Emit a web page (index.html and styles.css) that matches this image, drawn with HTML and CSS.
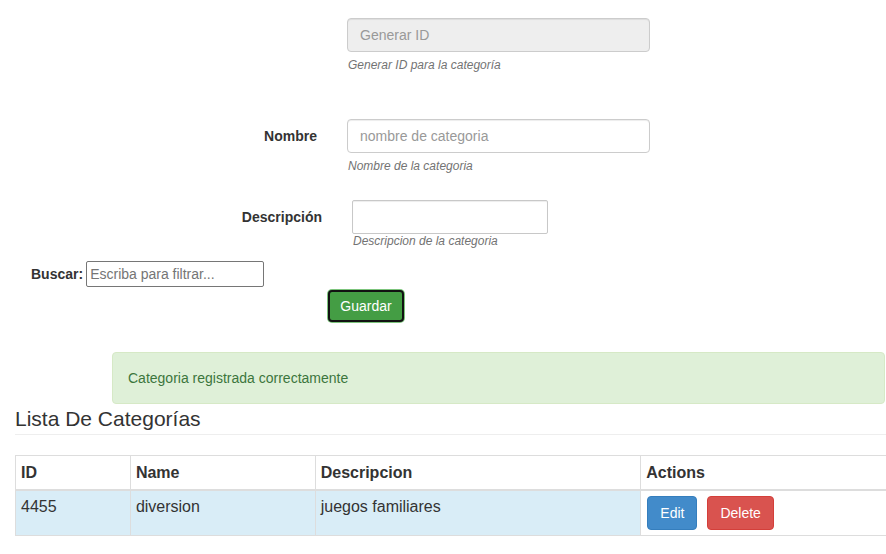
FILE: index.html
```html
<!DOCTYPE html>
<html lang="es">
<head>
<meta charset="utf-8">
<title>Categorías</title>
<link rel="stylesheet" href="styles.css">
</head>
<body>
<div class="page">
  <form class="form">
    <div class="group group-id">
      <div class="label-col"></div>
      <div class="field">
        <input class="control control-wide" type="text" placeholder="Generar ID" disabled>
        <span class="help">Generar ID para la categoría</span>
      </div>
    </div>
    <div class="group group-name">
      <label class="label-col">Nombre</label>
      <div class="field">
        <input class="control control-wide" type="text" placeholder="nombre de categoria">
        <span class="help">Nombre de la categoria</span>
      </div>
    </div>
    <div class="group group-desc">
      <label class="label-col label-desc">Descripción</label>
      <div class="field">
        <input class="control control-desc" type="text">
        <span class="help help-tight">Descripcion de la categoria</span>
      </div>
    </div>
    <div class="search">
      <label class="search-label">Buscar:</label>
      <input class="search-input" type="text" placeholder="Escriba para filtrar...">
    </div>
    <div class="actions">
      <button type="button" class="btn-save">Guardar</button>
    </div>
  </form>

  <div class="alert">Categoria registrada correctamente</div>

  <h3 class="list-title">Lista De Categorías</h3>

  <div class="table-wrap">
    <table class="table">
      <colgroup>
        <col class="c-id"><col class="c-name"><col class="c-desc"><col class="c-act">
      </colgroup>
      <thead>
        <tr><th>ID</th><th>Name</th><th>Descripcion</th><th>Actions</th></tr>
      </thead>
      <tbody>
        <tr class="info">
          <td>4455</td><td>diversion</td><td>juegos familiares</td>
          <td class="act-cell"><button type="button" class="btn btn-edit">Edit</button><button type="button" class="btn btn-delete">Delete</button></td>
        </tr>
      </tbody>
    </table>
  </div>
</div>
</body>
</html>
```

FILE: styles.css
```css
html, body {
  margin: 0;
  padding: 0;
  overflow: hidden;
  background: #fff;
}
body {
  font-family: "Liberation Sans", Arial, sans-serif;
  font-size: 14px;
  line-height: 20px;
  color: #333;
}
.page {
  width: 886px;
  overflow: hidden;
}
.form {
  padding-top: 18px;
}
.group {
  display: flex;
  align-items: flex-start;
}
.group-name { margin-top: 45px; }
.group-desc { margin-top: 25px; }
.label-col {
  width: 317px;
  padding-right: 30px;
  text-align: right;
  font-weight: bold;
  line-height: 34px;
  box-sizing: content-box;
}
.label-desc { width: 322px; }
.field {
  display: flex;
  flex-direction: column;
}
.control {
  box-sizing: border-box;
  height: 34px;
  padding: 6px 12px;
  font-family: "Liberation Sans", Arial, sans-serif;
  font-size: 14px;
  color: #555;
  background: #fff;
  border: 1px solid #ccc;
  border-radius: 4px;
  box-shadow: inset 0 1px 1px rgba(0,0,0,.075);
  outline: none;
}
.control::placeholder { color: #999; }
.control:disabled { background: #eee; }
.control-wide { width: 303px; }
.control-desc { width: 196px; border-radius: 2px; border-color: #c8c8c8; }
.help {
  display: block;
  margin-top: 5px;
  font-size: 12px;
  line-height: 17px;
  font-style: italic;
  color: #737373;
  padding-left: 1px;
}
.help-tight {
  margin-top: 0;
  line-height: 15px;
}
.search {
  display: flex;
  align-items: center;
  margin-top: 12px;
  padding-left: 31px;
}
.search-label {
  font-weight: bold;
  margin-right: 3px;
  line-height: 26px;
}
.search-input {
  box-sizing: border-box;
  width: 178px;
  height: 26px;
  padding: 1px 3px;
  font-family: "Liberation Sans", Arial, sans-serif;
  font-size: 14px;
  border: 1px solid #767676;
  border-radius: 2px;
  outline: none;
}
.search-input::placeholder { color: #757575; }
.actions {
  margin-top: 3px;
  padding-left: 328px;
}
.btn-save {
  box-sizing: border-box;
  width: 76px;
  height: 32px;
  padding: 0;
  font-family: "Liberation Sans", Arial, sans-serif;
  font-size: 14px;
  color: #fff;
  background: #449d44;
  border: 2px solid #121212;
  border-radius: 4px;
  box-shadow: 0 0 0 1px #7cc47c;
  cursor: pointer;
}
.alert {
  margin: 30px 0 0 112px;
  width: 773px;
  box-sizing: border-box;
  padding: 15px;
  color: #3c763d;
  background: #dff0d8;
  border: 1px solid #d6e9c6;
  border-radius: 4px;
}
.list-title {
  margin: 4px 0 0 15px;
  padding-bottom: 4px;
  font-size: 21px;
  line-height: 22px;
  font-weight: normal;
  color: #333;
  border-bottom: 1px solid #eee;
}
.table-wrap {
  margin: 20px 0 0 15px;
  width: 871px;
  overflow: hidden;
}
.table {
  width: 900px;
  border-collapse: collapse;
  font-size: 16px;
  line-height: 22px;
}
.c-id { width: 115px; }
.c-name { width: 185px; }
.c-desc { width: 326px; }
.c-act { width: 274px; }
.table th, .table td {
  border: 1px solid #ddd;
  padding: 5px 5px;
  text-align: left;
  vertical-align: top;
}
.table th {
  font-weight: bold;
  line-height: 23px;
  border-bottom: 2px solid #ddd;
}
.table tr.info td { background: #d9edf7; }
.table tr.info td.act-cell { background: #fff; }
.btn {
  box-sizing: border-box;
  height: 34px;
  padding: 6px 12px;
  font-family: "Liberation Sans", Arial, sans-serif;
  font-size: 14px;
  line-height: 20px;
  color: #fff;
  border: 1px solid transparent;
  border-radius: 4px;
  vertical-align: top;
  cursor: pointer;
}
.btn-edit {
  margin-left: 1px;
  background: #428bca;
  border-color: #357ebd;
}
.btn-delete {
  margin-left: 10px;
  background: #d9534f;
  border-color: #d43f3a;
}
```
